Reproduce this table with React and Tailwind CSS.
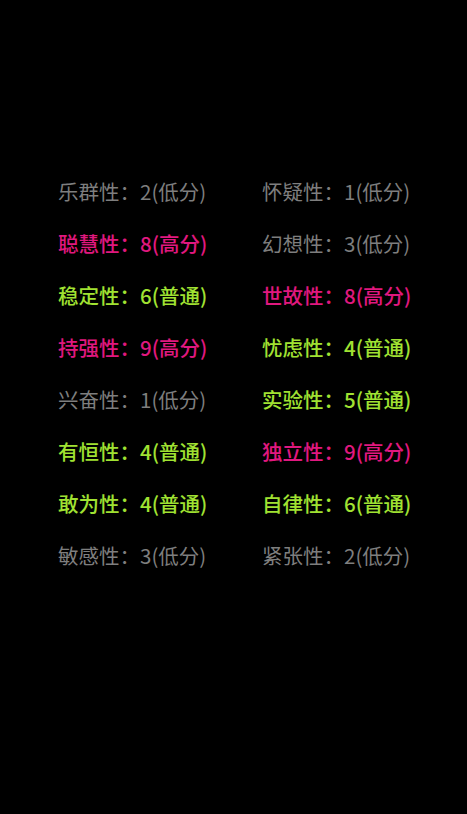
const GRAY = 'text-[#7e7e7e] font-normal';
const PINK = 'text-[#e0187f] font-medium';
const GREEN = 'text-[#a0e232] font-medium';

const rows = [
  [['乐群性', 2, '低分'], ['怀疑性', 1, '低分']],
  [['聪慧性', 8, '高分'], ['幻想性', 3, '低分']],
  [['稳定性', 6, '普通'], ['世故性', 8, '高分']],
  [['持强性', 9, '高分'], ['忧虑性', 4, '普通']],
  [['兴奋性', 1, '低分'], ['实验性', 5, '普通']],
  [['有恒性', 4, '普通'], ['独立性', 9, '高分']],
  [['敢为性', 4, '普通'], ['自律性', 6, '普通']],
  [['敏感性', 3, '低分'], ['紧张性', 2, '低分']],
];

const colorFor = (level) => {
  if (level === '高分') return PINK;
  if (level === '普通') return GREEN;
  return GRAY;
};

const Trait = ({ item }) => {
  const [name, score, level] = item;
  return (
    <div className={`h-[52px] flex items-center whitespace-nowrap ${colorFor(level)}`}>
      {name}：{score}({level})
    </div>
  );
};

export default function App() {
  return (
    <div
      className="w-[467px] h-[814px] bg-black pt-[165px] pl-[58px] text-[20.5px] leading-none"
      style={{ fontFamily: '"Noto Sans CJK SC", "Noto Sans", sans-serif' }}
    >
      <div className="grid grid-cols-[204px_204px]">
        {rows.map((row, i) => (
          <div key={i} className="contents">
            <Trait item={row[0]} />
            <Trait item={row[1]} />
          </div>
        ))}
      </div>
    </div>
  );
}
